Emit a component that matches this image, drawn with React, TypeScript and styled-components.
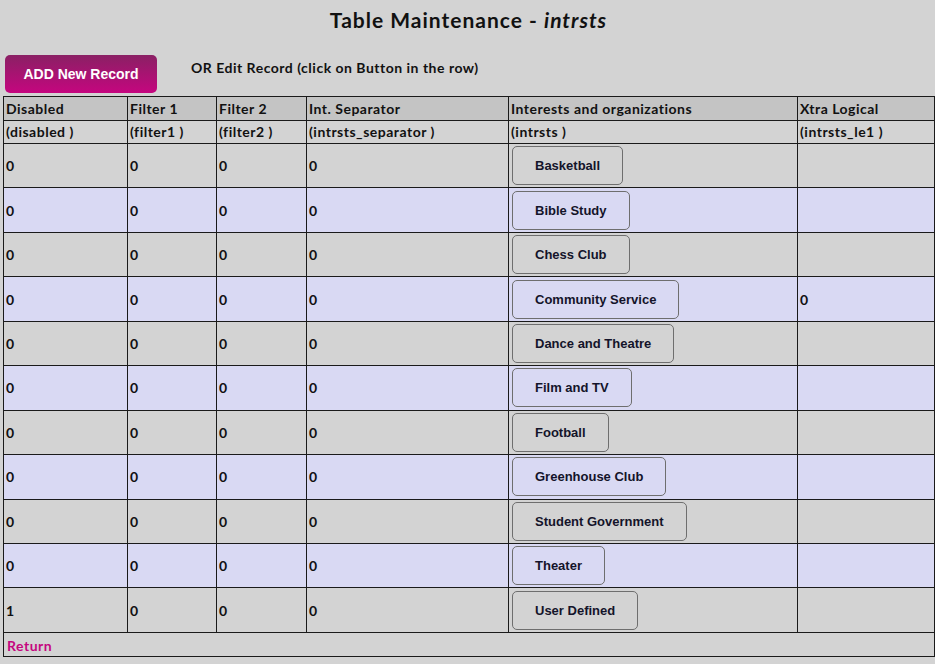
import React from 'react';
import styled, { createGlobalStyle } from 'styled-components';

const GlobalStyle = createGlobalStyle`
    html, body {
        margin: 0;
        padding: 0;
        background-color: #d3d3d3;
    }
    body {
        font-family: Lato, "DejaVu Sans", sans-serif;
        color: #111;
    }
`;

const Page = styled.div`
    display: flex;
    flex-direction: column;
    padding: 0 1px 0 3px;
`;

const Title = styled.h1`
    margin: 6px 0 0 0;
    height: 27px;
    text-align: center;
    font-size: 21px;
    font-weight: 700;
    line-height: 27px;
    letter-spacing: 1px;
    color: #111;

    em {
        font-style: italic;
    }
`;

const Toolbar = styled.div`
    display: flex;
    align-items: flex-start;
    gap: 34px;
    margin: 22px 0 3px 2px;
`;

const AddButton = styled.button`
    width: 152px;
    height: 38px;
    border: none;
    border-radius: 5px;
    background: linear-gradient(to bottom, #8a2064 0%, #c5067f 100%);
    color: #fff;
    font-family: "Liberation Sans", Arial, sans-serif;
    font-size: 14px;
    font-weight: 700;
    cursor: pointer;
`;

const EditHint = styled.span`
    padding-top: 4px;
    font-size: 14px;
    font-weight: 700;
    letter-spacing: 0.5px;
`;

const Grid = styled.table`
    width: 931px;
    border-collapse: collapse;
    table-layout: fixed;
`;

const HeadCell = styled.th<{ sub?: boolean }>`
    height: 22.5px;
    padding: 0 2px;
    border: 1px solid #1a1a1a;
    background-color: ${({ sub }) => (sub ? '#d3d3d3' : '#c4c4c4')};
    text-align: left;
    font-size: 14px;
    font-weight: 700;
    letter-spacing: 0.5px;
    white-space: nowrap;
`;

const Row = styled.tr<{ alt: boolean }>`
    background-color: ${({ alt }) => (alt ? '#d9d9f3' : '#d3d3d3')};
`;

const Cell = styled.td`
    height: 43.45px;
    padding: 0 2px;
    border: 1px solid #1a1a1a;
    font-size: 14px;
    font-weight: 700;
`;

const ButtonCell = styled(Cell)`
    padding: 0 3px;
`;

const RecordButton = styled.button`
    height: 39px;
    padding: 0 22px;
    border: 1px solid #6e6e6e;
    border-radius: 5px;
    background: transparent;
    color: #14142a;
    font-family: "Liberation Sans", Arial, sans-serif;
    font-size: 13px;
    font-weight: 700;
    cursor: pointer;
`;

const FootCell = styled.td`
    height: 23px;
    padding: 0 3px;
    border: 1px solid #1a1a1a;
`;

const ReturnLink = styled.a`
    color: #c5067f;
    font-size: 14px;
    font-weight: 700;
    letter-spacing: 0.5px;
    text-decoration: none;
`;

const columns = [
    { label: 'Disabled', field: '(disabled )', width: 124 },
    { label: 'Filter 1', field: '(filter1 )', width: 89 },
    { label: 'Filter 2', field: '(filter2 )', width: 90 },
    { label: 'Int. Separator', field: '(intrsts_separator )', width: 202 },
    { label: 'Interests and organizations', field: '(intrsts )', width: 289 },
    { label: 'Xtra Logical', field: '(intrsts_le1 )', width: 137 },
];

const records = [
    { disabled: 0, name: 'Basketball', extra: '' },
    { disabled: 0, name: 'Bible Study', extra: '' },
    { disabled: 0, name: 'Chess Club', extra: '' },
    { disabled: 0, name: 'Community Service', extra: '0' },
    { disabled: 0, name: 'Dance and Theatre', extra: '' },
    { disabled: 0, name: 'Film and TV', extra: '' },
    { disabled: 0, name: 'Football', extra: '' },
    { disabled: 0, name: 'Greenhouse Club', extra: '' },
    { disabled: 0, name: 'Student Government', extra: '' },
    { disabled: 0, name: 'Theater', extra: '' },
    { disabled: 1, name: 'User Defined', extra: '' },
];

export default function App() {
    return (
        <Page>
            <GlobalStyle />
            <Title>
                Table Maintenance - <em>intrsts</em>
            </Title>
            <Toolbar>
                <AddButton>ADD New Record</AddButton>
                <EditHint>OR Edit Record (click on Button in the row)</EditHint>
            </Toolbar>
            <Grid>
                <colgroup>
                    {columns.map((c) => (
                        <col key={c.label} style={{ width: c.width }} />
                    ))}
                </colgroup>
                <thead>
                    <tr>
                        {columns.map((c) => (
                            <HeadCell key={c.label}>{c.label}</HeadCell>
                        ))}
                    </tr>
                    <tr>
                        {columns.map((c) => (
                            <HeadCell key={c.field} sub>
                                {c.field}
                            </HeadCell>
                        ))}
                    </tr>
                </thead>
                <tbody>
                    {records.map((r, i) => (
                        <Row key={r.name} alt={i % 2 === 1}>
                            <Cell>{r.disabled}</Cell>
                            <Cell>0</Cell>
                            <Cell>0</Cell>
                            <Cell>0</Cell>
                            <ButtonCell>
                                <RecordButton>{r.name}</RecordButton>
                            </ButtonCell>
                            <Cell>{r.extra}</Cell>
                        </Row>
                    ))}
                    <tr>
                        <FootCell colSpan={6}>
                            <ReturnLink href="#">Return</ReturnLink>
                        </FootCell>
                    </tr>
                </tbody>
            </Grid>
        </Page>
    );
}
